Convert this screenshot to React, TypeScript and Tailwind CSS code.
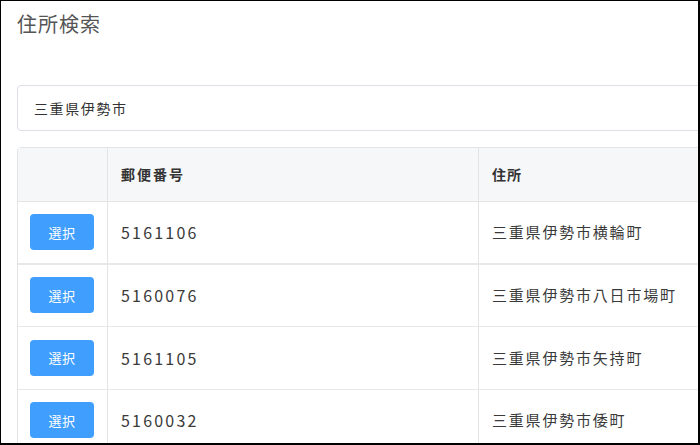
import React from "react";

const rows = [
  { zip: "5161106", addr: "三重県伊勢市横輪町" },
  { zip: "5160076", addr: "三重県伊勢市八日市場町" },
  { zip: "5161105", addr: "三重県伊勢市矢持町" },
  { zip: "5160032", addr: "三重県伊勢市倭町" },
];

const font = { fontFamily: '"Noto Sans CJK JP", "Noto Sans", sans-serif' };

export default function App() {
  return (
    <div
      className="w-[700px] h-[445px] overflow-hidden bg-white border-l border-t border-r-2 border-b-2 border-black"
      style={font}
    >
      <div className="w-[800px] pl-4">
        <h1 className="pt-[8px] h-[84px] text-[20px] leading-[30px] tracking-[1px] text-[#555]">住所検索</h1>
        <div className="h-[46px] border border-[#dcdfe6] rounded-[4px] flex items-center pl-4 text-[14px] tracking-[1.6px] text-[#333]">
          三重県伊勢市
        </div>
        <div className="mt-[16px] border border-[#e4e4e4] rounded-tl-[4px]">
          <div className="grid grid-cols-[90px_371px_1fr] h-[54px] bg-[#f6f7f9] border-b border-[#e4e4e4]">
            <div className="border-r border-[#e4e4e4]" />
            <div className="border-r border-[#e4e4e4] flex items-center pl-[13px] text-[14px] font-bold tracking-[2px] text-[#333]">郵便番号</div>
            <div className="flex items-center pl-[13px] text-[14px] font-bold tracking-[1px] text-[#333]">住所</div>
          </div>
          {rows.map((r, i) => (
            <div
              key={r.zip}
              className={`grid grid-cols-[90px_371px_1fr] h-[62.5px] ${i === 0 ? "border-b-2" : "border-b"} border-[#e8e8e8]`}
            >
              <div className="border-r border-[#e4e4e4] flex items-center pl-[12px]">
                <button className="w-[64px] h-[36px] rounded-[4px] bg-[#409eff] text-white text-[13px] tracking-[0.5px]">
                  選択
                </button>
              </div>
              <div className="border-r border-[#e4e4e4] flex items-center pl-[13px] text-[16px] tracking-[2.2px] text-[#3a3a3a]">
                {r.zip}
              </div>
              <div className="flex items-center pl-[13px] text-[15px] tracking-[1.8px] text-[#3a3a3a]">{r.addr}</div>
            </div>
          ))}
        </div>
      </div>
    </div>
  );
}
